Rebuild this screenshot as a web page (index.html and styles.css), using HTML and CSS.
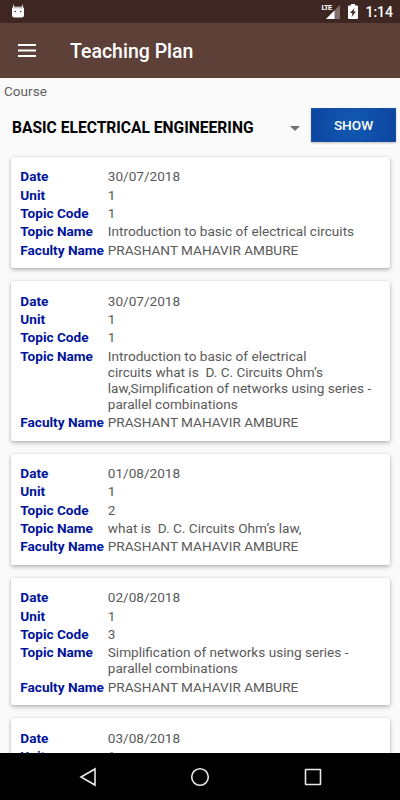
FILE: index.html
```html
<!DOCTYPE html>
<html lang="en">
<head>
    <meta charset="UTF-8">
    <meta name="viewport" content="width=device-width, initial-scale=1.0">
    <title>Teaching Plan</title>
    <link rel="stylesheet" href="styles.css">
</head>
<body>
    <div class="screen">
        <div class="status-bar">
            <svg class="robot" width="12" height="14" viewBox="0 0 12 14">
                <path d="M1 0l1.300 2.700h7.400L11 0v3l1 1.500V11q0 2.500-2.500 2.500h-7Q0 13.500 0 11V4.500L1 3z" fill="#fff"/>
                <path d="M1.500 3h9l.5 1.500H1z" fill="#c9c3c2"/>
                <circle cx="3.300" cy="7.500" r=".8" fill="#3e2723"/>
                <circle cx="8.700" cy="7.500" r=".8" fill="#3e2723"/>
            </svg>
            <div class="status-icons">
                <span class="lte">LTE</span>
                <svg class="signal" width="14" height="14" viewBox="0 0 14 14">
                    <path d="M14 0v14H0z" fill="#806f6c"/>
                    <path d="M8.500 5.500V14H0z" fill="#fff"/>
                </svg>
                <svg class="battery" width="10" height="15" viewBox="0 0 10 15">
                    <path d="M3 0h4v1.500h2q1 0 1 1V14q0 1-1 1H1q-1 0-1-1V2.500q0-1 1-1h2z" fill="#fff"/>
                    <path d="M6.500 4L2 9h2.500L3.500 13 8 7.500H5.500z" fill="#3e2723"/>
                </svg>
                <span class="clock">1:14</span>
            </div>
        </div>

        <div class="toolbar">
            <svg class="menu" width="18" height="13" viewBox="0 0 18 13">
                <path d="M0 1h18M0 6.500h18M0 12h18" stroke="#fff" stroke-width="2"/>
            </svg>
            <h1>Teaching Plan</h1>
        </div>

        <div class="content">
            <div class="course-label">Course</div>
            <div class="course-row">
                <div class="spinner">
                    <span>BASIC ELECTRICAL ENGINEERING</span>
                    <svg width="10" height="5" viewBox="0 0 10 5"><path d="M0 0h10L5 5z" fill="#737373"/></svg>
                </div>
                <button class="show">SHOW</button>
            </div>

            <div class="cards">
                <dl class="card">
                    <dt>Date</dt><dd>30/07/2018</dd>
                    <dt>Unit</dt><dd>1</dd>
                    <dt>Topic Code</dt><dd>1</dd>
                    <dt>Topic Name</dt><dd>Introduction to basic of electrical circuits</dd>
                    <dt>Faculty Name</dt><dd>PRASHANT MAHAVIR AMBURE</dd>
                </dl>
                <dl class="card">
                    <dt>Date</dt><dd>30/07/2018</dd>
                    <dt>Unit</dt><dd>1</dd>
                    <dt>Topic Code</dt><dd>1</dd>
                    <dt>Topic Name</dt><dd>Introduction to basic of electrical<br>circuits what is&nbsp; D. C. Circuits Ohm’s<br>law,Simplification of networks using series -<br>parallel combinations</dd>
                    <dt>Faculty Name</dt><dd>PRASHANT MAHAVIR AMBURE</dd>
                </dl>
                <dl class="card">
                    <dt>Date</dt><dd>01/08/2018</dd>
                    <dt>Unit</dt><dd>1</dd>
                    <dt>Topic Code</dt><dd>2</dd>
                    <dt>Topic Name</dt><dd>what is&nbsp; D. C. Circuits Ohm’s law,</dd>
                    <dt>Faculty Name</dt><dd>PRASHANT MAHAVIR AMBURE</dd>
                </dl>
                <dl class="card">
                    <dt>Date</dt><dd>02/08/2018</dd>
                    <dt>Unit</dt><dd>1</dd>
                    <dt>Topic Code</dt><dd>3</dd>
                    <dt>Topic Name</dt><dd>Simplification of networks using series -<br>parallel combinations</dd>
                    <dt>Faculty Name</dt><dd>PRASHANT MAHAVIR AMBURE</dd>
                </dl>
                <dl class="card">
                    <dt>Date</dt><dd>03/08/2018</dd>
                    <dt>Unit</dt><dd>1</dd>
                </dl>
            </div>
        </div>

        <div class="nav-bar">
            <svg width="18" height="20" viewBox="0 0 18 20"><path d="M16 2v16L2 10z"/></svg>
            <svg width="20" height="20" viewBox="0 0 20 20"><circle cx="10" cy="10" r="8.300"/></svg>
            <svg width="18" height="18" viewBox="0 0 18 18"><rect x="1.500" y="1.500" width="15" height="15" rx=".5"/></svg>
        </div>
    </div>
</body>
</html>
```
FILE: styles.css
```css
* {
    box-sizing: border-box;
}

body {
    margin: 0;
    font-family: Roboto, sans-serif;
    background-color: #fafafa;
}

.screen {
    width: 400px;
    height: 800px;
    display: flex;
    flex-direction: column;
    overflow: hidden;
}

.status-bar {
    height: 23px;
    flex-shrink: 0;
    display: flex;
    justify-content: space-between;
    align-items: center;
    padding: 0 7px 0 12px;
    background-color: #3e2723;
}

.robot {
    margin-top: -2px;
}

.status-icons {
    display: flex;
    align-items: center;
    color: #fff;
}

.lte {
    align-self: flex-start;
    margin: 0 -5px 0 0;
    font-size: 7.5px;
    line-height: 8px;
    font-weight: 700;
    letter-spacing: -0.7px;
    z-index: 1;
}

.battery {
    margin: 0 7px 0 8px;
}

.clock {
    font-size: 14px;
    font-weight: 500;
    line-height: 16px;
}

.toolbar {
    height: 55px;
    flex-shrink: 0;
    display: flex;
    align-items: center;
    gap: 34px;
    padding-left: 18px;
    background-color: #5d4037;
}

.toolbar h1 {
    margin: 1px 0 0;
    color: #fff;
    font-size: 19.5px;
    font-weight: 500;
}

.content {
    flex: 1;
    min-height: 0;
    overflow: hidden;
}

.course-label {
    padding: 5px 4px 0;
    height: 30px;
    color: #606060;
    font-size: 13.6px;
    line-height: 17px;
}

.course-row {
    display: flex;
    height: 34px;
    padding-right: 4px;
}

.spinner {
    flex: 1;
    display: flex;
    align-items: center;
    justify-content: space-between;
    padding: 6px 11px 0 12px;
    color: #000;
    font-size: 15.6px;
    font-weight: 700;
}

.show {
    width: 85px;
    padding: 0;
    border: 1px solid #1650a3;
    background: radial-gradient(circle, #1259b3, #0d47a1 40px);
    box-shadow: 0 1px 2px rgba(0, 0, 0, 0.25);
    color: #fff;
    font-family: inherit;
    font-size: 13.6px;
    font-weight: 500;
}

.cards {
    display: flex;
    flex-direction: column;
    gap: 13px;
    padding: 15px 10.5px 0;
}

.card {
    display: grid;
    grid-template-columns: 87.5px 1fr;
    row-gap: 2.4px;
    margin: 0;
    padding: 11.2px 10px 10.6px 9.8px;
    border-radius: 2px;
    background-color: #fff;
    box-shadow: 0 2px 4px rgba(0, 0, 0, 0.26), 0 0 2px rgba(0, 0, 0, 0.15);
    font-size: 13.6px;
    line-height: 16px;
    white-space: nowrap;
}

.card dt {
    color: #00149b;
    font-weight: 700;
}

.card dd {
    margin: 0;
    color: #5a5a5a;
}

.nav-bar {
    height: 47px;
    flex-shrink: 0;
    display: flex;
    align-items: center;
    justify-content: space-between;
    padding: 0 78.5px 0 79px;
    background-color: #000;
}

.nav-bar svg {
    fill: none;
    stroke: #e8e8e8;
    stroke-width: 1.6;
}
```
